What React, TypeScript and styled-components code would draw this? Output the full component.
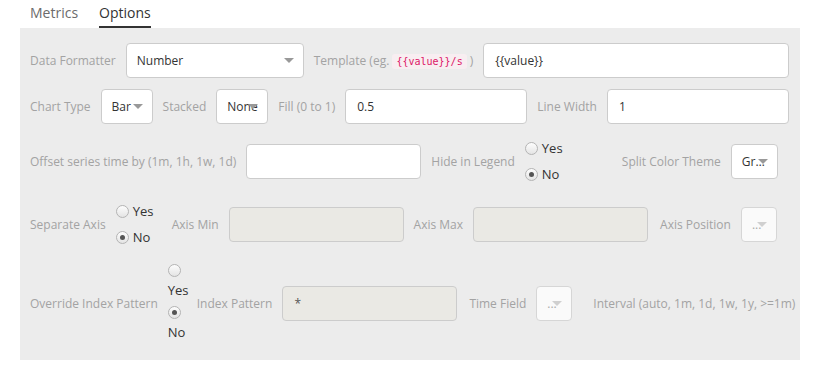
import React from "react"
import styled, { createGlobalStyle } from "styled-components"

const COLOR = {
  PANEL: "#ececec",
  LABEL: "#a3a3a3",
  TEXT: "#333333",
  TAB: "#6b6b6b",
  BORDER: "#cccccc",
  DISABLED: "#eae9e4",
  CODE: "#dd1767",
  CODE_BG: "#f8eef1",
}

const GlobalStyle = createGlobalStyle`
  body {
    margin: 0;
    background: #fff;
    font-family: "Open Sans", "Liberation Sans", sans-serif;
  }
`

const Page = styled.div`
  width: 780px;
  padding: 0 20px;
`

const Tabs = styled.ul`
  display: flex;
  gap: 21px;
  margin: 0;
  padding: 0 0 0 10px;
  list-style: none;
`

const Tab = styled.li<{ $active?: boolean }>`
  height: 26px;
  font-size: 14px;
  line-height: 26px;
  color: ${({ $active }) => ($active ? COLOR.TEXT : COLOR.TAB)};
  border-bottom: 2px solid ${({ $active }) => ($active ? COLOR.TEXT : "transparent")};
`

const Panel = styled.div`
  display: flex;
  flex-direction: column;
  gap: 11px;
  padding: 15px 11px 15px 10px;
  background: ${COLOR.PANEL};
`

const Row = styled.div`
  display: flex;
  align-items: center;
  gap: 10px;
`

const Label = styled.span<{ $ml?: number }>`
  margin-left: ${({ $ml }) => $ml || 0}px;
  font-size: 12px;
  color: ${COLOR.LABEL};
  white-space: nowrap;
`

const Code = styled.code`
  padding: 2px 4px;
  border-radius: 3px;
  font-family: "DejaVu Sans Mono", monospace;
  font-size: 10px;
  color: ${COLOR.CODE};
  background: ${COLOR.CODE_BG};
`

const Input = styled.input<{ $width?: number }>`
  box-sizing: border-box;
  ${({ $width }) => ($width ? `width: ${$width}px;` : "flex: 1; min-width: 0;")}
  height: 35px;
  padding: 0 11px;
  border: 1px solid ${COLOR.BORDER};
  border-radius: 4px;
  font-family: inherit;
  font-size: 12px;
  color: ${COLOR.TEXT};
  background: #fff;
  outline: none;

  &:disabled {
    background: ${COLOR.DISABLED};
    color: #555;
  }
`

const Select = styled.div<{ $width: number; $disabled?: boolean }>`
  position: relative;
  box-sizing: border-box;
  flex: none;
  width: ${({ $width }) => $width}px;
  height: 35px;
  padding: 0 8px 0 10px;
  border: 1px solid ${({ $disabled }) => ($disabled ? "#d6d6d6" : COLOR.BORDER)};
  border-radius: 4px;
  font-size: 12px;
  line-height: 33px;
  color: ${({ $disabled }) => ($disabled ? "#aaa" : COLOR.TEXT)};
  background: ${({ $disabled }) => ($disabled ? "#fafafa" : "#fff")};
  white-space: nowrap;
  overflow: hidden;
  text-overflow: ellipsis;

  &::after {
    content: "";
    position: absolute;
    z-index: 1;
    top: 14px;
    right: 9px;
    border-left: 5px solid transparent;
    border-right: 5px solid transparent;
    border-top: 5px solid ${({ $disabled }) => ($disabled ? "#d0d0d0" : "#999")};
  }
`

const RadioGroup = styled.div<{ $width: number }>`
  display: flex;
  flex-direction: column;
  flex: none;
  width: ${({ $width }) => $width}px;
`

const RadioOption = styled.label<{ $stacked?: boolean }>`
  display: flex;
  flex-direction: ${({ $stacked }) => ($stacked ? "column" : "row")};
  align-items: ${({ $stacked }) => ($stacked ? "flex-start" : "center")};
  gap: ${({ $stacked }) => ($stacked ? "3px" : "4px")};
  padding: ${({ $stacked }) => ($stacked ? "3px 0" : "0")};
  height: ${({ $stacked }) => ($stacked ? "auto" : "26px")};
  font-size: 13px;
  line-height: 20px;
  color: ${COLOR.TEXT};
`

const RadioDot = styled.span<{ $checked?: boolean }>`
  position: relative;
  box-sizing: border-box;
  flex: none;
  width: 13px;
  height: 13px;
  border: 1px solid #b4b4b4;
  border-radius: 50%;
  background: linear-gradient(#fdfdfd, #e4e4e4);

  &::after {
    content: "";
    display: ${({ $checked }) => ($checked ? "block" : "none")};
    position: absolute;
    top: 3px;
    left: 3px;
    width: 5px;
    height: 5px;
    border-radius: 50%;
    background: #555;
  }
`

type RadioProps = { width: number; value: string; stacked?: boolean }

const Radios = ({ width, value, stacked }: RadioProps) => (
  <RadioGroup $width={width}>
    {["Yes", "No"].map((opt) => (
      <RadioOption key={opt} $stacked={stacked}>
        <RadioDot $checked={opt === value} />
        {opt}
      </RadioOption>
    ))}
  </RadioGroup>
)

export default function App() {
  return (
    <Page>
      <GlobalStyle />
      <Tabs>
        <Tab>Metrics</Tab>
        <Tab $active>Options</Tab>
      </Tabs>
      <Panel>
        <Row>
          <Label>Data Formatter</Label>
          <Select $width={178}>Number</Select>
          <Label>
            Template (eg. <Code>{"{{value}}/s"}</Code> )
          </Label>
          <Input defaultValue="{{value}}" />
        </Row>
        <Row>
          <Label>Chart Type</Label>
          <Select $width={52}>Bar</Select>
          <Label>Stacked</Label>
          <Select $width={52}>None</Select>
          <Label>Fill (0 to 1)</Label>
          <Input defaultValue="0.5" />
          <Label>Line Width</Label>
          <Input defaultValue="1" />
        </Row>
        <Row>
          <Label>Offset series time by (1m, 1h, 1w, 1d)</Label>
          <Input $width={175} />
          <Label>Hide in Legend</Label>
          <Radios width={87} value="No" />
          <Label>Split Color Theme</Label>
          <Select $width={47}>Gradient</Select>
        </Row>
        <Row>
          <Label>Separate Axis</Label>
          <Radios width={46} value="No" />
          <Label>Axis Min</Label>
          <Input $width={175} disabled />
          <Label>Axis Max</Label>
          <Input $width={175} disabled />
          <Label $ml={2}>Axis Position</Label>
          <Select $width={36} $disabled>...</Select>
        </Row>
        <Row>
          <Label>Override Index Pattern</Label>
          <Radios width={19} value="No" stacked />
          <Label>Index Pattern</Label>
          <Input $width={175} disabled defaultValue="*" />
          <Label $ml={2}>Time Field</Label>
          <Select $width={36} $disabled>...</Select>
          <Label $ml={11}>Interval (auto, 1m, 1d, 1w, 1y, &gt;=1m)</Label>
        </Row>
      </Panel>
    </Page>
  )
}
